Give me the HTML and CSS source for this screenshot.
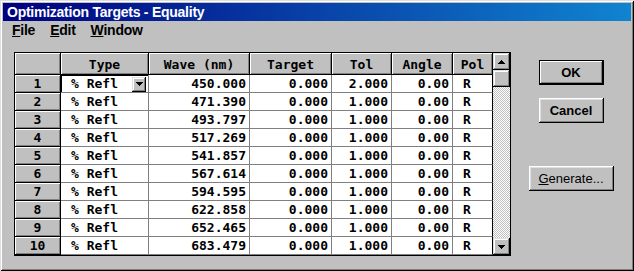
FILE: index.html
```html
<!DOCTYPE html>
<html>
<head>
<meta charset="utf-8">
<link rel="stylesheet" href="styles.css">
</head>
<body>
<div class="window">
  <div class="titlebar">Optimization Targets - Equality</div>
  <div class="menubar">
    <span class="menu"><u>F</u>ile</span>
    <span class="menu"><u>E</u>dit</span>
    <span class="menu"><u>W</u>indow</span>
  </div>
  <div class="main">
    <div class="grid-wrap">
      <div class="sheet">
        <div class="hc corner"></div><div class="hc">Type</div><div class="hc">Wave (nm)</div><div class="hc">Target</div><div class="hc">Tol</div><div class="hc">Angle</div><div class="hc">Pol</div>

        <div class="hc rh">1</div>
        <div class="dc combo"><span class="combo-text">% Refl</span><span class="dd-btn"><svg width="7" height="4" viewBox="0 0 7 4"><path d="M0 0h7v1h-1v1h-1v1h-1v1H3V3H2V2H1V1H0z"/></svg></span></div>
        <div class="dc num">450.000</div><div class="dc num">0.000</div><div class="dc num">2.000</div><div class="dc num">0.00</div><div class="dc pol">R</div>

        <div class="hc rh">2</div><div class="dc">% Refl</div><div class="dc num">471.390</div><div class="dc num">0.000</div><div class="dc num">1.000</div><div class="dc num">0.00</div><div class="dc pol">R</div>
        <div class="hc rh">3</div><div class="dc">% Refl</div><div class="dc num">493.797</div><div class="dc num">0.000</div><div class="dc num">1.000</div><div class="dc num">0.00</div><div class="dc pol">R</div>
        <div class="hc rh">4</div><div class="dc">% Refl</div><div class="dc num">517.269</div><div class="dc num">0.000</div><div class="dc num">1.000</div><div class="dc num">0.00</div><div class="dc pol">R</div>
        <div class="hc rh">5</div><div class="dc">% Refl</div><div class="dc num">541.857</div><div class="dc num">0.000</div><div class="dc num">1.000</div><div class="dc num">0.00</div><div class="dc pol">R</div>
        <div class="hc rh">6</div><div class="dc">% Refl</div><div class="dc num">567.614</div><div class="dc num">0.000</div><div class="dc num">1.000</div><div class="dc num">0.00</div><div class="dc pol">R</div>
        <div class="hc rh">7</div><div class="dc">% Refl</div><div class="dc num">594.595</div><div class="dc num">0.000</div><div class="dc num">1.000</div><div class="dc num">0.00</div><div class="dc pol">R</div>
        <div class="hc rh">8</div><div class="dc">% Refl</div><div class="dc num">622.858</div><div class="dc num">0.000</div><div class="dc num">1.000</div><div class="dc num">0.00</div><div class="dc pol">R</div>
        <div class="hc rh">9</div><div class="dc">% Refl</div><div class="dc num">652.465</div><div class="dc num">0.000</div><div class="dc num">1.000</div><div class="dc num">0.00</div><div class="dc pol">R</div>
        <div class="hc rh">10</div><div class="dc">% Refl</div><div class="dc num">683.479</div><div class="dc num">0.000</div><div class="dc num">1.000</div><div class="dc num">0.00</div><div class="dc pol">R</div>
      </div>
      <div class="vscroll">
        <div class="sb-btn"><svg width="7" height="4" viewBox="0 0 7 4"><path d="M3 0h1v1h1v1h1v1h1v1H0V3h1V2h1V1h1z"/></svg></div>
        <div class="sb-btn"></div>
        <div class="sb-track"></div>
        <div class="sb-btn"><svg width="7" height="4" viewBox="0 0 7 4"><path d="M0 0h7v1h-1v1h-1v1h-1v1H3V3H2V2H1V1H0z"/></svg></div>
      </div>
    </div>
    <div class="side">
      <div class="btn btn-default">OK</div>
      <div class="btn btn-cancel">Cancel</div>
      <div class="btn btn-gen"><span><u>G</u>enerate...</span></div>
    </div>
  </div>
</div>
</body>
</html>
```

FILE: styles.css
```css
* { box-sizing: border-box; }
html, body { margin: 0; padding: 0; }
body { width: 634px; height: 271px; background: #c0c0c0; overflow: hidden; }

.window {
  width: 634px;
  height: 271px;
  background: #c0c0c0;
  padding: 3px;
  box-shadow: inset 1px 1px #dfdfdf, inset -1px -1px #000, inset 2px 2px #fff, inset -2px -2px #808080;
  display: flex;
  flex-direction: column;
  font-family: "Liberation Sans", Arial, sans-serif;
  color: #000;
}

.titlebar {
  height: 18px;
  flex: none;
  background: linear-gradient(90deg, #000080, #1084d0);
  color: #fff;
  font-weight: bold;
  font-size: 14px;
  letter-spacing: -0.25px;
  line-height: 18px;
  padding-left: 4px;
  white-space: nowrap;
}

.menubar {
  height: 19px;
  flex: none;
  display: flex;
  gap: 15px;
  padding-left: 9px;
  font-size: 14px;
  font-weight: bold;
  letter-spacing: -0.25px;
  line-height: 19px;
}

.main { display: flex; flex: 1; }

.grid-wrap {
  margin: 12px 0 0 11px;
  display: flex;
  border: 1px solid #000;
  height: 204px;
  align-self: flex-start;
}

.sheet {
  display: grid;
  grid-template-columns: 46px 88px 101px 82px 60px 61px 40px;
  grid-template-rows: 22px repeat(10, 18px);
  font-family: "DejaVu Sans Mono", "Liberation Mono", monospace;
  font-weight: bold;
  font-size: 13px;
  line-height: 1;
}

.hc {
  background: #c0c0c0;
  border-right: 1px solid #000;
  border-bottom: 1px solid #000;
  box-shadow: inset 1px 1px #fff, inset -1px -1px #808080;
  display: flex;
  align-items: center;
  justify-content: center;
  padding-top: 1px;
}
.rh { padding-top: 0; }

.dc {
  background: #fff;
  border-right: 1px solid #808080;
  border-bottom: 1px solid #808080;
  display: flex;
  align-items: center;
  padding: 0 3px 0 10px;
  white-space: nowrap;
}
.num { justify-content: flex-end; }
.pol { border-right-color: #000; }

.combo {
  box-shadow: inset 1px 1px #000;
  padding-right: 2px;
  padding-left: 10px;
}
.combo-text { flex: 1; }
.dd-btn {
  width: 14px;
  height: 15px;
  margin-top: 1px;
  background: #c0c0c0;
  box-shadow: inset -1px -1px #000, inset 1px 1px #dfdfdf, inset -2px -2px #808080, inset 2px 2px #fff;
  display: flex;
  align-items: center;
  justify-content: center;
}
.dd-btn svg, .sb-btn svg { display: block; shape-rendering: crispEdges; }

.vscroll {
  width: 17px;
  display: flex;
  flex-direction: column;
}
.sb-btn {
  height: 17px;
  flex: none;
  background: #c0c0c0;
  box-shadow: inset -1px -1px #000, inset 1px 1px #dfdfdf, inset -2px -2px #808080, inset 2px 2px #fff;
  display: flex;
  align-items: center;
  justify-content: center;
}
.sb-track {
  flex: 1;
  background: repeating-conic-gradient(#fff 0 25%, #c0c0c0 0 50%) 0 0 / 2px 2px;
}

.side {
  flex: 1;
  display: flex;
  flex-direction: column;
  align-items: center;
  padding-top: 20px;
}

.btn {
  width: 65px;
  height: 25px;
  background: #c0c0c0;
  box-shadow: inset -1px -1px #000, inset 1px 1px #fff, inset -2px -2px #808080, inset 2px 2px #dfdfdf;
  font-size: 13px;
  font-weight: bold;
  display: flex;
  align-items: center;
  justify-content: center;
}
.btn-default {
  border: 1px solid #000;
  box-shadow: inset -1px -1px #000, inset 1px 1px #fff, inset -2px -2px #808080;
}
.btn-cancel { margin-top: 13px; }
.btn-gen {
  margin-top: 43px;
  width: 85px;
  font-weight: normal;
}
```
